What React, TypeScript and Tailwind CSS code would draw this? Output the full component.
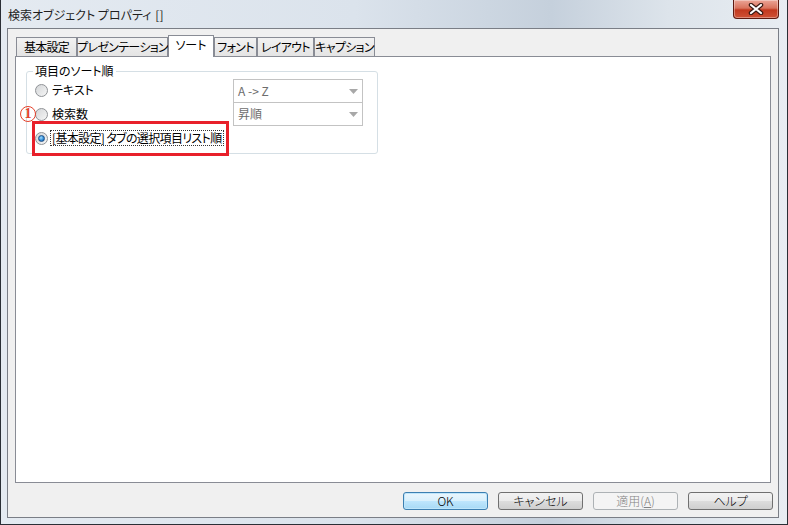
import type { ReactNode } from "react";

function Radio({ checked }: { checked?: boolean }) {
  return (
    <span className="flex h-[13px] w-[13px] shrink-0 items-center justify-center rounded-full border border-[#8f9296] bg-[linear-gradient(135deg,#d4d6d8,#f6f6f6)]">
      {checked && (
        <span className="h-[7px] w-[7px] rounded-full border border-[#1d4f86] bg-[radial-gradient(circle_at_40%_35%,#9fdcff,#2b86d4_60%,#16508f)]" />
      )}
    </span>
  );
}

function Tab({ label, width, active }: { label: string; width: string; active?: boolean }) {
  if (active) {
    return (
      <div
        className={`relative z-10 -mb-px flex h-[22px] ${width} items-center justify-center whitespace-nowrap border border-b-0 border-[#898c95] bg-white pb-[3px]`}
      >
        {label}
      </div>
    );
  }
  return (
    <div
      className={`flex h-[19px] ${width} items-center justify-center whitespace-nowrap border border-b-0 border-[#898c95] bg-[linear-gradient(#f2f2f2,#e4e4e4)] tracking-[-0.7px]`}
    >
      {label}
    </div>
  );
}

function Button({ children, kind }: { children: ReactNode; kind?: "default" | "disabled" }) {
  let cls =
    "border-[#707070] bg-[linear-gradient(#f2f2f2_0%,#ebebeb_50%,#dddddd_51%,#cfcfcf_100%)] text-black";
  if (kind === "default")
    cls =
      "border-[#3c7fb1] bg-[linear-gradient(#eaf6fd_0%,#d9f0fc_50%,#bee6fd_51%,#a7d9f5_100%)] text-black shadow-[inset_0_0_0_1px_#bfe6fb]";
  if (kind === "disabled") cls = "border-[#adb2b5] bg-[#f4f4f4] text-[#838383]";
  return (
    <div
      className={`flex h-[18px] w-[85px] items-center justify-center rounded-[3px] border font-light ${cls}`}
    >
      {children}
    </div>
  );
}

function SelectBox({ value }: { value: string }) {
  return (
    <div className="flex h-[24px] w-[130px] items-center justify-between border border-[#c3c3c3] bg-white pl-[4px] pr-[4px] text-[#6d6d6d]">
      <span>{value}</span>
      <svg width="9" height="5" viewBox="0 0 9 5">
        <path d="M0 0 H9 L4.5 5 Z" fill="#a8a8a8" />
      </svg>
    </div>
  );
}

export default function App() {
  return (
    <div className="flex h-[525px] w-[788px] flex-col border-b border-l border-r border-[#2b2f36] bg-[linear-gradient(90deg,#e4eaf1_0%,#dbe3ec_45%,#c5d0dc_70%,#dde4eb_85%,#e8edf2_100%)] text-[12px] leading-[14px] text-black font-['Noto_Sans_CJK_JP',sans-serif] [font-feature-settings:'palt']">
      {/* title bar */}
      <div className="flex h-[28px] shrink-0 items-start justify-between">
        <div className="pl-[7px] pt-[8px] text-[12px] text-[#1e1e1e]">
          検索オブジェクト プロパティ<span className="ml-[4px]">[]</span>
        </div>
        <div className="mr-[8px] flex h-[19px] w-[46px] items-center justify-center rounded-b-[4px] border border-t-0 border-[#5e1a10] bg-[linear-gradient(#eba597_0%,#d9735d_45%,#c2391f_55%,#cf5236_100%)] shadow-[inset_0_0_0_1px_rgba(255,255,255,0.35)]">
          <svg width="16" height="12" viewBox="0 0 16 12">
            <path d="M3 2 L13 10 M13 2 L3 10" stroke="#3a1a14" strokeWidth="4.5" strokeLinecap="round" />
            <path d="M3 2 L13 10 M13 2 L3 10" stroke="#ffffff" strokeWidth="2.2" strokeLinecap="round" />
          </svg>
        </div>
      </div>

      {/* client area */}
      <div className="mb-[6px] ml-[6px] mr-[8px] flex flex-1 flex-col border border-[#7a7e86] bg-[#f0f0f0] px-[7px] pb-[7px] pt-[6px]">
        <div className="flex items-end pl-[1px]">
          <Tab label="基本設定" width="w-[61px]" />
          <Tab label="プレゼンテーション" width="w-[91px]" />
          <Tab label="ソート" width="w-[46px]" active />
          <Tab label="フォント" width="w-[43px]" />
          <Tab label="レイアウト" width="w-[57px]" />
          <Tab label="キャプション" width="w-[61px]" />
        </div>

        <div className="flex-1 border border-[#898c95] bg-white pl-[10px] pt-[7px]">
          <fieldset className="w-[352px] rounded-[3px] border border-[#d5dfe5] pb-[3px]">
            <legend className="ml-[6px] px-[2px]">項目のソート順</legend>
            <div className="flex">
              <div className="flex w-[206px] flex-col pl-[8px]">
                <div className="flex h-[24px] items-center gap-[4px]">
                  <Radio />
                  <span>テキスト</span>
                </div>
                <div className="relative flex h-[24px] items-center gap-[4px]">
                  <Radio />
                  <span>検索数</span>
                  <span className="absolute left-[-15px] top-[4px] flex h-[16px] w-[16px] items-center justify-center rounded-full border border-[#e5412b] font-['Liberation_Serif',serif] text-[14px] font-bold leading-none text-[#e5412b]">
                    1
                  </span>
                </div>
                <div className="relative flex h-[24px] items-center gap-[2px]">
                  <Radio checked />
                  <span className="whitespace-nowrap border border-dotted border-[#333] px-[1px] tracking-[-0.65px]">
                    [基本設定] タブの選択項目リスト順
                  </span>
                  <span className="absolute left-[-3px] top-[-5px] h-[35px] w-[197px] border-[3px] border-[#e8202a]" />
                </div>
              </div>
              <div className="mt-[1px] flex flex-col">
                <SelectBox value="A -> Z" />
                <div className="-mt-px">
                  <SelectBox value="昇順" />
                </div>
              </div>
            </div>
          </fieldset>
        </div>

        <div className="mt-[9px] flex justify-end gap-[10px]">
          <Button kind="default">OK</Button>
          <Button>キャンセル</Button>
          <Button kind="disabled">
            <span>
              適用(<span className="underline">A</span>)
            </span>
          </Button>
          <div className="-mr-[2px]">
            <Button>ヘルプ</Button>
          </div>
        </div>
      </div>
    </div>
  );
}
